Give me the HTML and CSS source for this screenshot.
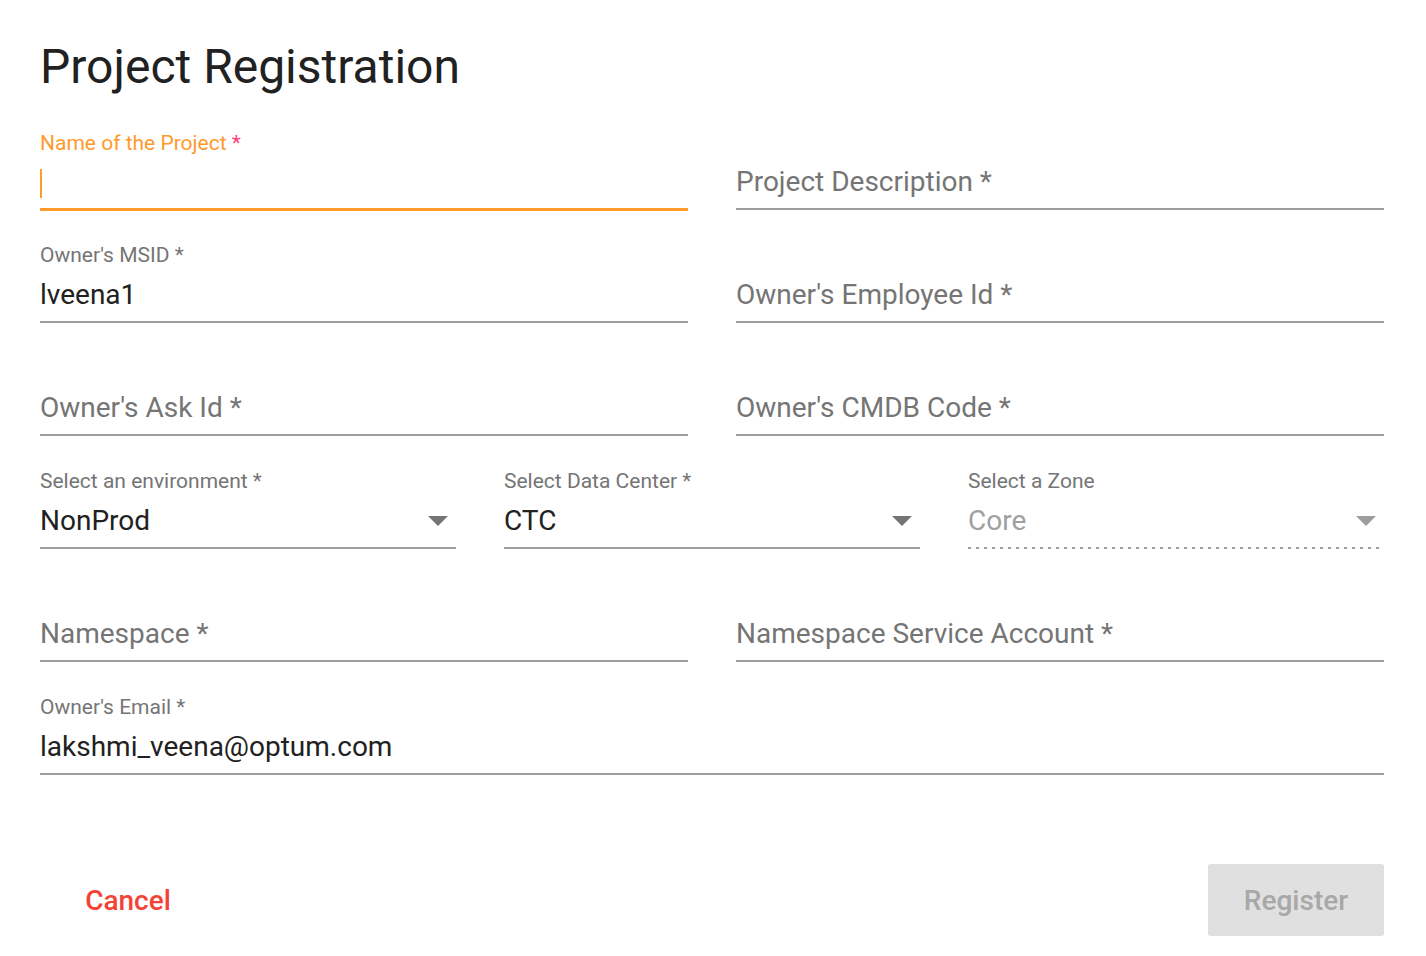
FILE: index.html
```html
<!DOCTYPE html>
<html lang="en">
<head>
<meta charset="utf-8">
<title>Project Registration</title>
<link rel="stylesheet" href="styles.css">
</head>
<body>
<div class="page">
  <h1 class="title">Project Registration</h1>
  <form class="form">
    <div class="row two">
      <div class="field focused">
        <div class="label">Name of the Project <span class="req">*</span></div>
        <div class="value"><span class="caret"></span></div>
        <div class="line"></div>
      </div>
      <div class="field">
        <div class="value hint">Project Description *</div>
        <div class="line"></div>
      </div>
    </div>
    <div class="row two">
      <div class="field">
        <div class="label">Owner's MSID *</div>
        <div class="value">lveena1</div>
        <div class="line"></div>
      </div>
      <div class="field">
        <div class="value hint">Owner's Employee Id *</div>
        <div class="line"></div>
      </div>
    </div>
    <div class="row two">
      <div class="field">
        <div class="value hint">Owner's Ask Id *</div>
        <div class="line"></div>
      </div>
      <div class="field">
        <div class="value hint">Owner's CMDB Code *</div>
        <div class="line"></div>
      </div>
    </div>
    <div class="row three">
      <div class="field select">
        <div class="label">Select an environment *</div>
        <div class="value"><span>NonProd</span><svg class="arrow" width="20" height="10" viewBox="0 0 20 10"><path d="M0 0h20L10 10z"/></svg></div>
        <div class="line"></div>
      </div>
      <div class="field select">
        <div class="label">Select Data Center *</div>
        <div class="value"><span>CTC</span><svg class="arrow" width="20" height="10" viewBox="0 0 20 10"><path d="M0 0h20L10 10z"/></svg></div>
        <div class="line"></div>
      </div>
      <div class="field select disabled">
        <div class="label">Select a Zone</div>
        <div class="value"><span>Core</span><svg class="arrow" width="20" height="10" viewBox="0 0 20 10"><path d="M0 0h20L10 10z"/></svg></div>
        <div class="line dashed"></div>
      </div>
    </div>
    <div class="row two">
      <div class="field">
        <div class="value hint">Namespace *</div>
        <div class="line"></div>
      </div>
      <div class="field">
        <div class="value hint">Namespace Service Account *</div>
        <div class="line"></div>
      </div>
    </div>
    <div class="row one">
      <div class="field">
        <div class="label">Owner's Email *</div>
        <div class="value">lakshmi_veena@optum.com</div>
        <div class="line"></div>
      </div>
    </div>
    <div class="actions">
      <button type="button" class="btn cancel">Cancel</button>
      <button type="button" class="btn register" disabled>Register</button>
    </div>
  </form>
</div>
</body>
</html>
```
FILE: styles.css
```css
* { box-sizing: border-box; }
html, body { margin: 0; padding: 0; background: #fff; }
body {
  font-family: Roboto, "Liberation Sans", Arial, sans-serif;
  color: #212121;
}
.page {
  padding: 0 42px 0 40px;
  width: 1426px;
}
.title {
  margin: 0;
  height: 97px;
  padding-top: 37px;
  font-size: 48px;
  line-height: 60px;
  font-weight: 400;
  color: #212121;
}
.form { display: flex; flex-direction: column; }
.row {
  display: grid;
  column-gap: 48px;
}
.row.two { grid-template-columns: 1fr 1fr; }
.row.three { grid-template-columns: 1fr 1fr 1fr; }
.row.one { grid-template-columns: 1fr; }
.field {
  height: 113px;
  display: flex;
  flex-direction: column;
  justify-content: flex-end;
  position: relative;
}
.label {
  font-size: 21px;
  line-height: 24px;
  color: #757575;
  margin-bottom: 8px;
  white-space: nowrap;
}
.focused .label { color: #ff9a2c; }
.req { color: #ff4081; }
.value {
  height: 40px;
  line-height: 40px;
  font-size: 28px;
  color: #212121;
  margin-bottom: 6px;
  display: flex;
  align-items: center;
  white-space: nowrap;
}
.value.hint { color: #757575; }
.caret {
  display: block;
  width: 2px;
  height: 29px;
  background: #ff9a2c;
}
.line {
  height: 2px;
  background: #9e9e9e;
}
.focused .line {
  height: 3px;
  background: #ff9a2c;
  margin-top: -1px;
  margin-bottom: -1px;
}
.select .value { justify-content: space-between; padding-right: 8px; }
.arrow { fill: #757575; flex: none; }
.disabled .value { color: #a0a0a0; }
.disabled .arrow { fill: #9e9e9e; }
.line.dashed {
  background: repeating-linear-gradient(to right, #9e9e9e 0 3px, transparent 3px 8px);
  margin-right: 4px;
}
.actions {
  display: flex;
  justify-content: space-between;
  margin-top: 89px;
}
.btn {
  width: 176px;
  height: 72px;
  border: none;
  border-radius: 3px;
  font-family: Roboto, "Liberation Sans", Arial, sans-serif;
  font-size: 28px;
  font-weight: 500;
  background: transparent;
  padding: 0;
}
.cancel { color: #f44336; }
.register { background: #e0e0e0; color: #a8a8a8; }
```
